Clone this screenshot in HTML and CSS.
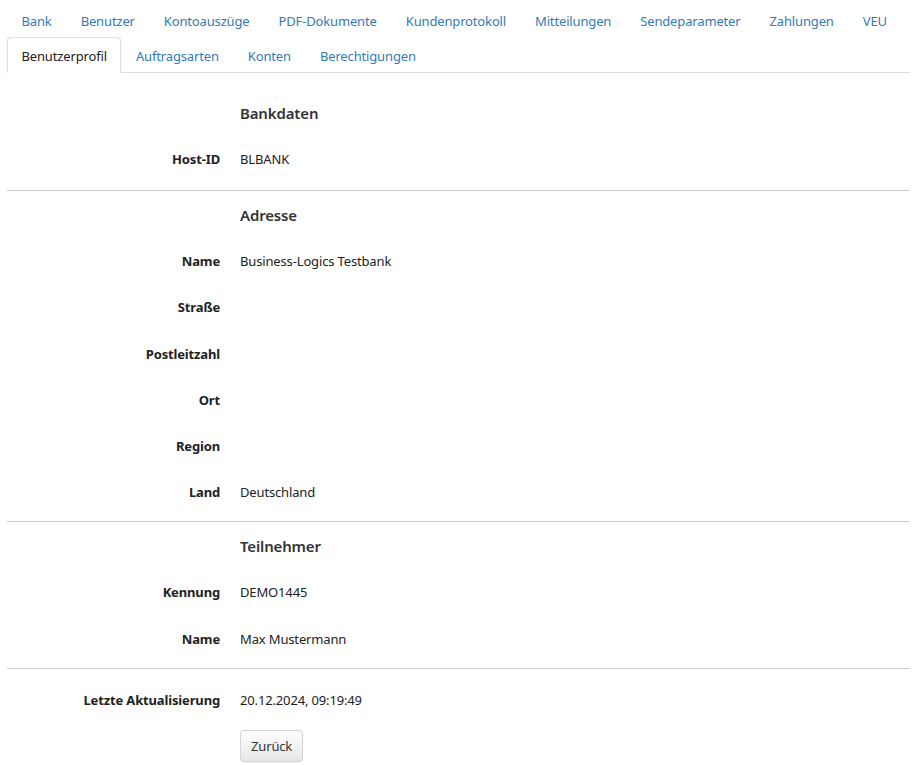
FILE: index.html
```html
<!DOCTYPE html>
<html lang="de">
<head>
<meta charset="utf-8">
<title>Benutzerprofil</title>
<link rel="stylesheet" href="styles.css">
</head>
<body>
<div class="page">
  <nav class="tabnav">
    <ul class="tabs">
      <li><a href="#">Bank</a></li>
      <li><a href="#">Benutzer</a></li>
      <li><a href="#">Kontoauszüge</a></li>
      <li><a href="#">PDF-Dokumente</a></li>
      <li><a href="#">Kundenprotokoll</a></li>
      <li><a href="#">Mitteilungen</a></li>
      <li><a href="#">Sendeparameter</a></li>
      <li><a href="#">Zahlungen</a></li>
      <li><a href="#">VEU</a></li>
    </ul>
    <ul class="tabs">
      <li class="active"><a href="#">Benutzerprofil</a></li>
      <li><a href="#">Auftragsarten</a></li>
      <li><a href="#">Konten</a></li>
      <li><a href="#">Berechtigungen</a></li>
    </ul>
  </nav>

  <section class="group first">
    <div class="row head"><span class="label"></span><h4>Bankdaten</h4></div>
    <div class="row"><span class="label">Host-ID</span><span class="value">BLBANK</span></div>
  </section>
  <hr class="sep">
  <section class="group">
    <div class="row head"><span class="label"></span><h4>Adresse</h4></div>
    <div class="row"><span class="label">Name</span><span class="value">Business-Logics Testbank</span></div>
    <div class="row"><span class="label">Straße</span><span class="value"></span></div>
    <div class="row"><span class="label">Postleitzahl</span><span class="value"></span></div>
    <div class="row"><span class="label">Ort</span><span class="value"></span></div>
    <div class="row"><span class="label">Region</span><span class="value"></span></div>
    <div class="row"><span class="label">Land</span><span class="value">Deutschland</span></div>
  </section>
  <hr class="sep">
  <section class="group">
    <div class="row head"><span class="label"></span><h4>Teilnehmer</h4></div>
    <div class="row"><span class="label">Kennung</span><span class="value">DEMO1445</span></div>
    <div class="row"><span class="label">Name</span><span class="value">Max Mustermann</span></div>
  </section>
  <hr class="sep">
  <section class="group last">
    <div class="row"><span class="label">Letzte Aktualisierung</span><span class="value">20.12.2024, 09:19:49</span></div>
    <div class="actions"><button class="btn" type="button">Zurück</button></div>
  </section>
</div>
</body>
</html>
```
FILE: styles.css
```css
html, body {
  margin: 0;
  padding: 0;
  background: #fff;
}
body {
  font-family: "Noto Sans", "Open Sans", "DejaVu Sans", sans-serif;
  font-size: 13px;
  line-height: 18px;
  letter-spacing: -0.15px;
  color: #333;
}
.page {
  margin: 2px 13px 0 7px;
}
.tabnav {
  border-bottom: 1px solid #ddd;
}
.tabs {
  list-style: none;
  margin: 0;
  padding: 0;
  display: flex;
  flex-wrap: nowrap;
}
.tabs li {
  margin-bottom: -1px;
  white-space: nowrap;
}
.tabs a {
  display: block;
  padding: 9px 13.5px 7px;
  border: 1px solid transparent;
  border-radius: 4px 4px 0 0;
  color: #337ab7;
  text-decoration: none;
}
.tabs li.active a {
  color: #222;
  background: #fff;
  border-color: #ddd #ddd transparent;
  margin-bottom: -1px;
  position: relative;
}
.group {
  display: flex;
  flex-direction: column;
  padding-bottom: 6px;
}
.group.first {
  padding-top: 16px;
  padding-bottom: 8px;
}
.group.last {
  padding-top: 8px;
}
.row {
  display: grid;
  grid-template-columns: 213px 1fr;
  column-gap: 20px;
  align-items: center;
  height: 46.2px;
}
.row.head {
  height: 47px;
}
.label {
  text-align: right;
  font-weight: 700;
  color: #222;
}
.value {
  color: #222;
}
h4 {
  margin: 0;
  font-size: 15px;
  font-weight: 600;
  color: #333;
}
.sep {
  margin: 0;
  border: 0;
  border-top: 1px solid #ccc;
}
.actions {
  padding: 7px 0 0 233px;
}
.btn {
  font-family: inherit;
  font-size: 13px;
  line-height: 18px;
  letter-spacing: inherit;
  color: #333;
  padding: 6px 10px 6px 10px;
  border: 1px solid #d4d4d4;
  border-radius: 4px;
  background: linear-gradient(#ffffff, #e6e6e6);
  box-shadow: 0 1px 1px rgba(0,0,0,0.05);
}
```
